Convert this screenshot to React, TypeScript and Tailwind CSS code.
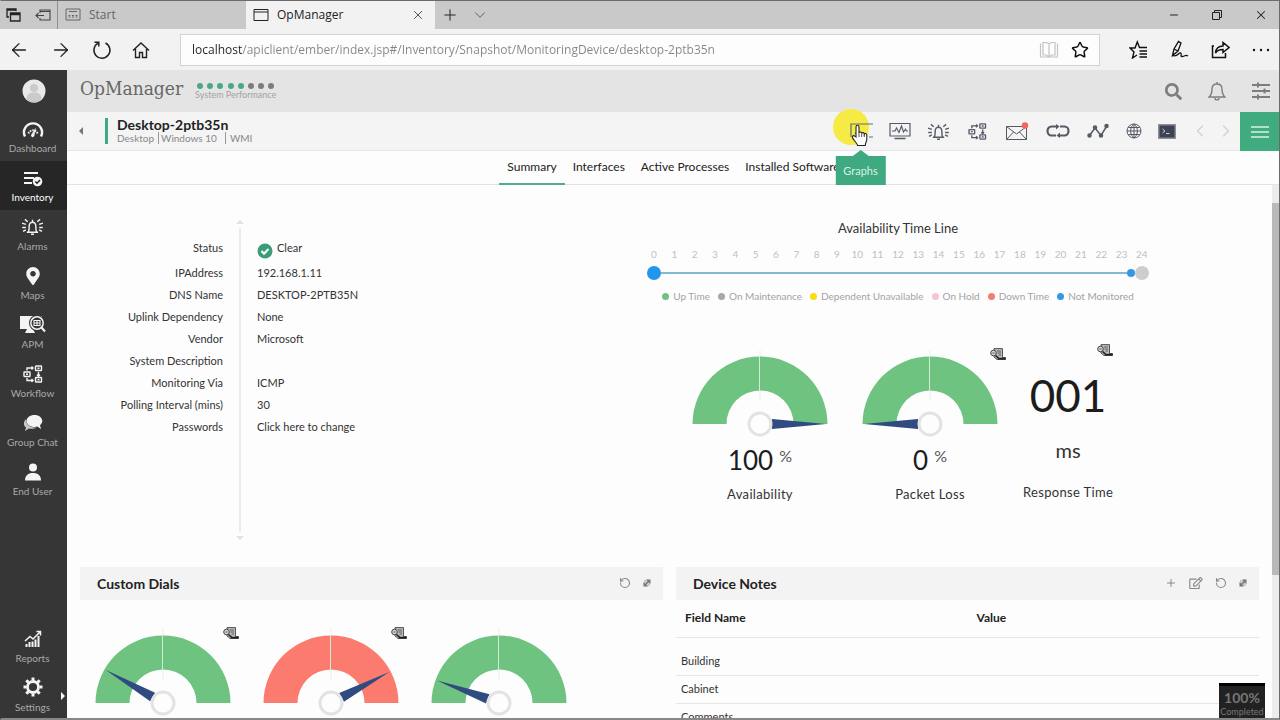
import type { ReactNode } from 'react';
import {
  ArrowLeft,
  ArrowRight,
  ChevronDown,
  ChevronLeft,
  ChevronRight,
  Minus,
  Plus,
  RotateCcw,
  Star,
  X,
} from 'lucide-react';
import { FaSearch, FaMapMarkerAlt, FaRegEdit } from 'react-icons/fa';

type IconProps = { className?: string };

const AlarmIcon = ({ className }: IconProps) => (
  <svg viewBox="0 0 24 20" className={className} fill="none" stroke="currentColor" strokeWidth="1.5">
    <path d="M6 16h12M7.5 16c1-1.2 1-3 1-6.5a3.5 4 0 0 1 7 0c0 3.500 0 5.300 1 6.500M10.500 18.200h3M12 3v2" />
    <path d="M1 6.500l4 1.300M1.200 11H5M2 15.200l3-1.600M4 2.500l3 2.500M23 6.500l-4 1.300M22.800 11H19M22 15.200l-3-1.600M20 2.500L17 5" />
  </svg>
);

const WorkflowIcon = ({ className }: IconProps) => (
  <svg viewBox="0 0 20 18" className={className} fill="none" stroke="currentColor" strokeWidth="1.4">
    <rect x="1" y="7" width="6" height="4.500" rx="0.500" />
    <rect x="12.500" y="1" width="6" height="4.500" rx="0.500" />
    <rect x="12.500" y="12.500" width="6" height="4.500" rx="0.500" />
    <path d="M4 5.500V3h6M8.500 1.500L10 3 8.500 4.500M4 13v2.500h6M8.500 14l1.500 1.500L8.500 17M15.500 7v4M14 9.800l1.500 1.500L17 9.800" />
    <path d="M3 9.200h2M14.500 3.200h2M14.500 14.800h2" />
  </svg>
);

const DashboardIcon = ({ className }: IconProps) => (
  <svg viewBox="0 0 22 18" className={className} fill="none" stroke="currentColor">
    <path d="M3 16.500a9 9 0 1 1 16 0" strokeWidth="2.400" />
    <path d="M6.500 13.500a4.800 4.800 0 0 1 9 0" strokeWidth="2" strokeDasharray="1.500 1" />
    <path d="M13.500 8.500l-1.300 6.500a1.500 1.500 0 1 1-2.400-.8z" fill="currentColor" strokeWidth="0.500" />
  </svg>
);

const InventoryIcon = ({ className }: IconProps) => (
  <svg viewBox="0 0 20 16" className={className} fill="none" stroke="currentColor">
    <path d="M1 2h14M1 7h10M1 12h8" strokeWidth="2" />
    <circle cx="14.500" cy="10.500" r="4.800" fill="currentColor" stroke="none" />
    <path d="M12.300 10.500l1.700 1.700 3-3.200" stroke="#262626" strokeWidth="1.500" />
  </svg>
);

const ApmIcon = ({ className }: IconProps) => (
  <svg viewBox="0 0 27 20" className={className} fill="none" stroke="currentColor">
    <path d="M1 2h22v13h-9l2 4H6l2-4H1z" fill="currentColor" stroke="none" />
    <circle cx="18" cy="9" r="8" fill="#363636" stroke="none" />
    <circle cx="18" cy="9" r="6.200" strokeWidth="1.500" />
    <path d="M15 6.500h6v5h-6zM15 9h6M18 6.500v5" strokeWidth="1.100" />
    <path d="M22.500 13.500l3.500 4" strokeWidth="2" />
  </svg>
);

const ChatIcon = ({ className }: IconProps) => (
  <svg viewBox="0 0 20 18" className={className}>
    <path d="M3 5C0 8 .5 12 3 13.500L2 17l4-2.500c3 .6 6 0 7.500-1C7 14 3 11 3 5z" fill="#c9c9c9" />
    <path d="M11.500 1C7 1 3.500 3.700 3.500 7s3.500 6 8 6c1 0 2-.1 2.800-.4L18 15l-1-3.800c1.400-1 2.300-2.500 2.300-4.200 0-3.300-3.300-6-7.800-6z" fill="currentColor" />
  </svg>
);

const UserIcon = ({ className }: IconProps) => (
  <svg viewBox="0 0 18 18" className={className} fill="currentColor">
    <circle cx="9" cy="4.500" r="4" />
    <path d="M1 17.500c0-5 3-7.500 8-7.500s8 2.500 8 7.500z" />
  </svg>
);

const ReportsIcon = ({ className }: IconProps) => (
  <svg viewBox="0 0 18 18" className={className} fill="none" stroke="currentColor">
    <path d="M2.500 17v-3M5.500 17v-5M8.500 17v-5.500M11.500 17V9.500M14.500 17V6" strokeWidth="2" />
    <path d="M1 11l5-4.500 3 2.500 7-7M12.500 1.500H16.500V5.500" strokeWidth="1.500" />
  </svg>
);

const SettingsIcon = ({ className }: IconProps) => (
  <svg viewBox="0 0 20 20" className={className} fill="none" stroke="currentColor">
    <circle cx="10" cy="10" r="5.500" strokeWidth="2.800" />
    <path d="M10 .5v3M10 16.500v3M.5 10h3M16.500 10h3M3.300 3.300l2.100 2.100M14.600 14.600l2.100 2.100M3.300 16.700l2.100-2.100M14.600 5.400l2.100-2.100" strokeWidth="3" />
  </svg>
);

const HistoryIcon = ({ className }: IconProps) => (
  <svg viewBox="0 0 16 12" className={className} fill="none" stroke="#444">
    <path d="M4 .6h8.500v8.900H15.500v2H7L4 9z" fill="#bdbdbd" strokeWidth="0.900" />
    <circle cx="3.500" cy="5" r="2.800" fill="#d5d5d5" strokeWidth="1" />
    <path d="M7 3h4M7.500 5h3.500M8.500 7h2.500M2.300 5h2.400" strokeWidth="0.800" />
    <path d="M5.500 7.500l3 2.700M8 10.600h7.500" strokeWidth="1.600" stroke="#222" />
  </svg>
);

const ExpandIcon = ({ className }: IconProps) => (
  <svg viewBox="0 0 8 8" className={className}>
    <path d="M1 1h6v6H1z" fill="#c9c9c9" />
    <path d="M3 .5h4.500V5zM.5 3v4.500H5z" fill="#777" />
    <path d="M2 6l4-4" stroke="#777" strokeWidth="1.200" />
  </svg>
);

const navItems = [
  { label: 'Dashboard', icon: <DashboardIcon className="h-[18px] w-[22px]" /> },
  { label: 'Inventory', icon: <InventoryIcon className="h-4 w-5" />, active: true },
  { label: 'Alarms', icon: <AlarmIcon className="h-[19px] w-[23px]" /> },
  { label: 'Maps', icon: <FaMapMarkerAlt className="h-[18px] w-3.5" /> },
  { label: 'APM', icon: <ApmIcon className="h-5 w-[27px]" /> },
  { label: 'Workflow', icon: <WorkflowIcon className="h-[18px] w-5" /> },
  { label: 'Group Chat', icon: <ChatIcon className="h-[18px] w-5" /> },
  { label: 'End User', icon: <UserIcon className="h-[18px] w-[18px]" /> },
];

const tabs = ['Summary', 'Interfaces', 'Active Processes', 'Installed Software'];

const details: [string, ReactNode][] = [
  ['IPAddress', '192.168.1.11'],
  ['DNS Name', 'DESKTOP-2PTB35N'],
  ['Uplink Dependency', 'None'],
  ['Vendor', 'Microsoft'],
  ['System Description', ''],
  ['Monitoring Via', 'ICMP'],
  ['Polling Interval (mins)', '30'],
  ['Passwords', <a href="#passwords">Click here to change</a>],
];

const legend = [
  { label: 'Up Time', color: 'bg-[#6fc283]' },
  { label: 'On Maintenance', color: 'bg-[#a8a8a8]' },
  { label: 'Dependent Unavailable', color: 'bg-[#fbdc0e]' },
  { label: 'On Hold', color: 'bg-[#f8c3d2]' },
  { label: 'Down Time', color: 'bg-[#f07f72]' },
  { label: 'Not Monitored', color: 'bg-[#3498e4]' },
];

const customDials = [
  { angle: 30, color: '#6fc381', history: true },
  { angle: 152, color: '#fb7c6e', history: true },
  { angle: 20, color: '#6fc381', history: false },
];

function NavItem({ label, icon, active, arrow }: { label: string; icon: ReactNode; active?: boolean; arrow?: boolean }) {
  return (
    <a
      href={`#${label}`}
      className={`relative flex h-[49px] flex-col items-center pr-0.5 text-[10px] leading-4 ${active ? 'bg-[#262626] text-white' : 'text-[#a9a9a9]'}`}
    >
      <span className="flex h-7 items-end pt-1 pb-0.5 text-[#f4f4f4]">{icon}</span>
      {label}
      {arrow && <span className="absolute right-0.5 bottom-5 border-y-4 border-l-4 border-y-transparent border-l-white" />}
    </a>
  );
}

// angle: 0 points left, 180 points right
function Gauge({ angle, color = '#6fc381', history }: { angle: number; color?: string; history?: boolean }) {
  return (
    <div className="relative w-[136px]">
      <svg viewBox="0 0 136 90" className="block h-[90px] w-[136px]">
        <path d="M68 2v50" stroke="#ececec" />
        <path d="M.5 76a67.500 67.500 0 0 1 135 0h-34a33.500 33.500 0 0 0-67 0z" fill={color} />
        <path d="M67.500 8v35" stroke="#cfeed4" />
        <g transform={`rotate(${angle} 68 76)`}>
          <path d="M2 76l54-5v10z" fill="#2f4b7f" />
        </g>
        <circle cx="68" cy="76" r="11" fill="#fdfdfd" stroke="#e3e3e6" strokeWidth="3" />
      </svg>
      {history && <HistoryIcon className="absolute top-0 -right-2 h-3 w-4" />}
    </div>
  );
}

function BrowserBar() {
  return (
    <header className="font-['Open_Sans','Noto_Sans',sans-serif] text-[#222]">
      <div className="flex h-[29px] items-center bg-[#c9c9c9] text-xs">
        <div className="flex h-full w-[58px] items-center gap-3.5 border-r border-[#8f8f8f] pl-1.5">
          <svg viewBox="0 0 15 14" className="h-3.5 w-[15px]" fill="none" stroke="#222" strokeWidth="1.300">
            <path d="M3 9H1V1h9v2M1 2h9M4.500 5h9.500v8H4.500zM4.500 6.500H14" />
          </svg>
          <svg viewBox="0 0 16 12" className="h-3 w-4" fill="none" stroke="#444" strokeWidth="1.100">
            <path d="M5 4V1h10v10H5V9M5 2.500h10M1 6.500h8M3.500 4L1 6.500 3.500 9" />
          </svg>
        </div>
        <button className="flex h-full w-[188px] items-center gap-2 pl-[7px] text-[#666]">
          <svg viewBox="0 0 16 13" className="h-[13px] w-4" fill="none" stroke="#666">
            <path d="M1 1h14v11H1zM4 3.500h8" />
            <path d="M3.500 9h2M7 9h2M10.500 9h2M3.500 7.500h2M7 7.500h2M10.500 7.500h2" />
          </svg>
          Start
        </button>
        <div className="flex h-full w-[189px] items-center gap-2 bg-[#f2f2f2] pr-2.5 pl-[7px]">
          <svg viewBox="0 0 16 14" className="h-3.5 w-4" fill="none" stroke="#222">
            <path d="M1 1.500h14v11H1zM1 4h14" />
          </svg>
          <span className="flex-1">OpManager</span>
          <button aria-label="Close tab"><X className="h-3.5 w-3.5" strokeWidth={1.3} /></button>
        </div>
        <button aria-label="New tab" className="ml-1.5"><Plus className="h-[18px] w-[18px]" strokeWidth={1.3} /></button>
        <button aria-label="Tab previews" className="ml-3"><ChevronDown className="h-[18px] w-[18px] text-[#555]" strokeWidth={1.2} /></button>
        <div className="ml-auto flex items-center gap-[31px] pr-3">
          <button aria-label="Minimize"><Minus className="h-3 w-3" strokeWidth={2} /></button>
          <button aria-label="Restore">
            <svg viewBox="0 0 12 12" className="h-3 w-3" fill="none" stroke="#222">
              <path d="M1.500 3.500h7v7h-7zM3.500 3.500v-2h7v7h-2" />
            </svg>
          </button>
          <button aria-label="Close"><X className="h-3.5 w-3.5" strokeWidth={1.8} /></button>
        </div>
      </div>
      <div className="flex h-[41px] items-center bg-[#f2f2f2]">
        <div className="flex w-[180px] items-center gap-5 pl-2">
          <button aria-label="Back"><ArrowLeft className="h-[22px] w-[22px]" strokeWidth={1.4} /></button>
          <button aria-label="Forward"><ArrowRight className="h-[22px] w-[22px]" strokeWidth={1.4} /></button>
          <button aria-label="Refresh">
            <svg viewBox="0 0 20 20" className="h-5 w-5" fill="none" stroke="#222" strokeWidth="1.500">
              <path d="M13.500 3A8 8 0 1 1 6 3.200M2.500 2.200h4.300v4.300" />
            </svg>
          </button>
          <button aria-label="Home">
            <svg viewBox="0 0 18 18" className="h-[18px] w-[18px]" fill="none" stroke="#222" strokeWidth="1.400">
              <path d="M1 9.500L9 2l8 7.500M3.500 8v8.500h4v-5h3v5h4V8" />
            </svg>
          </button>
        </div>
        <div className="flex h-8 flex-1 items-center gap-3 border border-[#d2d2d2] bg-[#fdfdfd] pr-2.5 pl-[11px]">
          <input
            aria-label="Address"
            defaultValue="localhost/apiclient/ember/index.jsp#/Inventory/Snapshot/MonitoringDevice/desktop-2ptb35n"
            className="flex-1 bg-[linear-gradient(to_right,#222_50px,#858585_50px)] bg-clip-text text-xs text-transparent outline-none"
          />
          <button aria-label="Reading view">
            <svg viewBox="0 0 20 18" className="h-[18px] w-5" fill="none" stroke="#c4c4c4" strokeWidth="1.200">
              <path d="M10 3v13M1.500 2.500v13.500h17V2.500M4 14V1.500h3.500L10 3l2.500-1.500H16V14h-3.500L10 16l-2.500-2z" />
            </svg>
          </button>
          <button aria-label="Add to favorites"><Star className="h-[18px] w-[18px] text-[#111]" strokeWidth={2} strokeLinejoin="miter" /></button>
        </div>
        <div className="flex w-[180px] items-center justify-end gap-[22px] pr-2.5">
          <button aria-label="Favorites">
            <svg viewBox="0 0 19 19" className="h-[19px] w-[19px]" fill="none" stroke="#111" strokeWidth="1.400">
              <path d="M8 15l-4.500 3 1.500-6L1 8h5L8.300 2l2.200 5.500H18M10.500 11H18M10.500 14H18M10.500 17H18" />
            </svg>
          </button>
          <button aria-label="Notes">
            <svg viewBox="0 0 19 19" className="h-[19px] w-[19px]" fill="none" stroke="#111" strokeWidth="1.300">
              <path d="M2.500 15.500L4 9 8.500 1.500l2.500 1.500-3 8zM2.500 15.500c5 2 6-3 8-2.500s-1 4 2 3.500 3-2 5.500-.5M4 9l4 2" />
            </svg>
          </button>
          <button aria-label="Share">
            <svg viewBox="0 0 19 18" className="h-[18px] w-[19px]" fill="none" stroke="#111" strokeWidth="1.500">
              <path d="M3 5H1.500v11.500h13V12M4.500 12c.5-5 3.500-7 7.500-7V1.500L18 6.500l-6 5V8.500c-3.500 0-6 1-7.500 3.500z" />
            </svg>
          </button>
          <button aria-label="More">
            <svg viewBox="0 0 18 4" className="h-1 w-[18px]" fill="#111">
              <circle cx="2" cy="2" r="1.200" /><circle cx="9" cy="2" r="1.200" /><circle cx="16" cy="2" r="1.200" />
            </svg>
          </button>
        </div>
      </div>
    </header>
  );
}

function Sidebar() {
  return (
    <nav className="flex w-[67px] shrink-0 flex-col bg-[#363636]">
      <div className="flex h-[42px] items-center justify-center">
        <svg viewBox="0 0 24 24" className="h-6 w-6">
          <circle cx="12" cy="12" r="11.500" fill="#e9e9e9" />
          <circle cx="12" cy="9" r="4" fill="#cbcbcb" />
          <path d="M4.500 20c0-5 3-6.500 7.500-6.500s7.500 1.500 7.500 6.500c-4 4.500-11 4.500-15 0z" fill="#cbcbcb" />
        </svg>
      </div>
      {navItems.map((item) => (
        <NavItem key={item.label} {...item} />
      ))}
      <div className="mt-auto">
        <NavItem label="Reports" icon={<ReportsIcon className="h-[18px] w-[18px]" />} />
        <NavItem label="Settings" icon={<SettingsIcon className="h-5 w-5" />} arrow />
      </div>
    </nav>
  );
}

function DeviceBar() {
  return (
    <div className="flex h-[39px] items-center border-b border-[#e6e6e8] bg-[#f4f4f5]">
      <button aria-label="Back to list" className="ml-3 border-y-4 border-r-4 border-y-transparent border-r-[#777]" />
      <div className="ml-[22px] border-l-[3px] border-[#3fa981] pl-[9px]">
        <h1 className="text-sm leading-[14px] font-bold text-[#222]">Desktop-2ptb35n</h1>
        <p className="flex gap-1 text-[10px] leading-3 text-[#888]">
          <span>Desktop</span>
          <span className="border-l border-[#999] pl-0.5">Windows 10</span>
          <span className="ml-1 border-l border-[#999] pl-1">WMI</span>
        </p>
      </div>
      <div className="ml-auto flex items-center text-[#555a66]">
        <div className="relative flex w-[39px] justify-center">
          <span className="absolute -top-[13px] -left-2 h-9 w-9 rounded-full bg-[#f6ea45]" />
          <button aria-label="Graphs" className="relative">
            <svg viewBox="0 0 24 18" className="h-[18px] w-6" fill="none" stroke="#666b75" strokeWidth="1.200">
              <path d="M2 15V2h22M20 15h4M6 12l3-4" />
            </svg>
          </button>
          <svg viewBox="0 0 18 23" className="absolute top-0.5 left-2.5 z-20 h-[23px] w-[18px]" fill="#fff" stroke="#222" strokeWidth="1.100">
            <path d="M5 13V3c0-2.300 3-2.300 3 0v6c.3-1.500 2.600-1.300 2.700.4.500-1.200 2.500-1 2.600.7.600-1 2.500-.7 2.500 1V15c0 2.500-1.500 3.500-1.500 6.500H6.500C6 18.500 2.500 16.500 1.500 13.500c-.5-1.600 1.200-2.500 2.300-1.300z" />
            <path d="M8 9v4M10.700 9.500V13M13.300 10.500V13" strokeWidth="0.800" />
          </svg>
          <div className="absolute top-7 left-1/2 z-10 flex -translate-x-1/2 flex-col items-center">
            <span className="border-x-8 border-b-6 border-x-transparent border-b-[#3fa981]" />
            <span className="bg-[#3fa981] px-2 py-1.5 text-[11px] leading-[17px] text-[#d9f2e6]">Graphs</span>
          </div>
        </div>
        <button aria-label="Performance" className="flex w-[39px] justify-center">
          <svg viewBox="0 0 22 18" className="h-[18px] w-[22px]" fill="none" stroke="currentColor">
            <path d="M1 1.500h20v12.500H1z" strokeWidth="1.200" />
            <path d="M3 9h3l1.500-3L10 10.500 12.500 4l2 6L16.500 7l1 2H19" strokeWidth="1.100" />
            <path d="M5.500 16.500h11" strokeWidth="1.500" />
          </svg>
        </button>
        <button aria-label="Alarms" className="flex w-[39px] justify-center"><AlarmIcon className="h-[19px] w-[23px]" /></button>
        <button aria-label="Workflow" className="flex w-[39px] justify-center"><WorkflowIcon className="h-[17px] w-[19px]" /></button>
        <button aria-label="Mail" className="flex w-10 justify-center">
          <svg viewBox="0 0 24 19" className="h-[19px] w-6" fill="none" stroke="currentColor">
            <path d="M1.500 4.500h20v13h-20zM1.500 4.500l10 7.500 10-7.500M1.500 17.500l7-7.500M21.500 17.500l-7-7.500" />
            <circle cx="20" cy="3.500" r="3.200" fill="#f4655b" stroke="none" />
          </svg>
        </button>
        <button aria-label="Dependencies" className="flex w-[42px] justify-center">
          <svg viewBox="0 0 24 14" className="h-3.5 w-6" fill="none" stroke="currentColor" strokeWidth="2.200">
            <path d="M10 11.500H5.500a4 4.500 0 0 1 0-9H12M14 2.500h4.500a4 4.500 0 0 1 0 9H12" />
            <path d="M10 0l3.500 2.500L10 5.500zM14 8.500l-3.500 3L14 14z" fill="currentColor" stroke="none" />
          </svg>
        </button>
        <button aria-label="Trend" className="flex w-[38px] justify-center">
          <svg viewBox="0 0 22 16" className="h-4 w-[22px]" fill="currentColor" stroke="currentColor" strokeWidth="1.500">
            <path d="M2.500 12.500L8 5l6 7.500 5.500-9" fill="none" />
            <circle cx="2.500" cy="12.500" r="1.500" /><circle cx="8" cy="4.500" r="1.500" /><circle cx="14" cy="12.500" r="1.500" /><circle cx="19.500" cy="3" r="1.500" />
          </svg>
        </button>
        <button aria-label="Web" className="flex w-[34px] justify-center">
          <svg viewBox="0 0 16 16" className="h-4 w-4" fill="none" stroke="currentColor">
            <circle cx="8" cy="8" r="7" />
            <path d="M8 1v14M1 8h14M2.300 4.500h11.400M2.300 11.500h11.400M8 1C3.500 4 3.500 12 8 15M8 1c4.500 3 4.500 11 0 14" />
          </svg>
        </button>
        <button aria-label="Terminal" className="flex w-8 justify-center">
          <svg viewBox="0 0 18 15" className="h-[15px] w-[18px]">
            <path d="M0 0h18v15H0z" fill="#8b8f99" />
            <path d="M1.500 1.500h15v12h-15z" fill="#3d4354" />
            <path d="M4.500 5l2.500 2-2.500 2M8 9.500h3.500" fill="none" stroke="#c9ccd4" />
          </svg>
        </button>
        <button aria-label="Previous" className="flex w-[33px] justify-center text-[#cfcfd6]"><ChevronLeft className="h-5 w-5" strokeWidth={1.4} /></button>
        <button aria-label="Next" className="flex w-5 justify-center text-[#cfcfd6]"><ChevronRight className="h-5 w-5" strokeWidth={1.4} /></button>
      </div>
      <button aria-label="Menu" className="-mb-px ml-1 flex h-[39px] w-10 items-center justify-center bg-[#3fab7f]">
        <svg viewBox="0 0 18 14" className="h-3.5 w-[18px]" stroke="#d8f3e6" strokeWidth="1.300">
          <path d="M0 2h18M0 7h18M0 12h18" />
        </svg>
      </button>
    </div>
  );
}

function PanelHeader({ title, children }: { title: string; children?: ReactNode }) {
  return (
    <div className="flex h-[33px] items-center bg-[#f3f3f3] pr-3 pl-[17px] text-[#888]">
      <h2 className="mr-auto text-sm font-bold text-[#222]">{title}</h2>
      <div className="flex items-center gap-3 pb-0.5">
        {children}
        <button aria-label="Refresh"><RotateCcw className="h-3 w-3" strokeWidth={2.2} /></button>
        <button aria-label="Expand"><ExpandIcon className="h-2 w-2" /></button>
      </div>
    </div>
  );
}

function Details() {
  return (
    <dl className="grid grid-cols-[143px_1fr] content-start gap-x-[34px] pt-[19px] text-[11px] leading-[22px] text-[#333]">
      <dt className="h-[25px] text-right">Status</dt>
      <dd className="flex h-[25px] gap-1">
        <svg viewBox="0 0 16 16" className="mt-1.5 h-4 w-4">
          <circle cx="8" cy="8" r="7.500" fill="#3a9d78" />
          <path d="M4.500 8l2.500 2.700L11.500 6" fill="none" stroke="#fff" strokeWidth="2" />
        </svg>
        Clear
      </dd>
      {details.map(([label, value]) => (
        <div key={label} className="contents">
          <dt className="h-[22px] text-right">{label}</dt>
          <dd>{value}</dd>
        </div>
      ))}
    </dl>
  );
}

function Availability() {
  return (
    <div className="text-center">
      <h2 className="text-[13px] leading-5 text-[#333]">Availability Time Line</h2>
      <div className="mt-2 flex justify-between text-[10px] leading-4 text-[#c0c0c0]">
        {Array.from({ length: 25 }, (_, hour) => (
          <span key={hour} className="w-5">{hour}</span>
        ))}
      </div>
      <div className="mt-1 flex items-center px-[3px]">
        <span className="h-3.5 w-3.5 rounded-full bg-[#2196ec]" />
        <span className="h-0.5 flex-1 bg-[#84b9d3]" />
        <span className="h-2 w-2 rounded-full bg-[#3498e4]" />
        <span className="h-3.5 w-3.5 rounded-full bg-[#cdcdcd]" />
      </div>
      <ul className="mt-2 flex justify-center gap-2 text-[10px] leading-4 text-[#a3a3a3]">
        {legend.map((item) => (
          <li key={item.label} className="flex items-center gap-1">
            <span className={`h-[7px] w-[7px] rounded-full ${item.color}`} />
            {item.label}
          </li>
        ))}
      </ul>
      <div className="mt-11 flex gap-[34px] pl-12 text-[13px] text-[#333]">
        {[
          { label: 'Availability', value: 100, history: false },
          { label: 'Packet Loss', value: 0, history: true },
        ].map((dial) => (
          <div key={dial.label}>
            <Gauge angle={dial.value * 1.8} history={dial.history} />
            <div className="mt-1 flex justify-center gap-1.5 text-[26px] leading-9 text-[#1c1c1c]">
              {dial.value}
              <span className="text-base leading-7 text-[#555]">%</span>
            </div>
            <div className="mt-1 leading-6 tracking-wide">{dial.label}</div>
          </div>
        ))}
        <div className="relative -ml-[9px] pt-5">
          <HistoryIcon className="absolute -top-1 right-0 h-3 w-4" />
          <div className="text-[44px] leading-[54px] text-[#1c1c1c]">001</div>
          <div className="mt-4 text-xl leading-6 text-[#333]">ms</div>
          <div className="mt-5 leading-5 tracking-wide">Response Time</div>
        </div>
      </div>
    </div>
  );
}

function DeviceNotes() {
  return (
    <section>
      <PanelHeader title="Device Notes">
        <button aria-label="Add"><Plus className="h-3 w-3" strokeWidth={2} /></button>
        <button aria-label="Edit"><FaRegEdit className="h-3 w-3.5" /></button>
      </PanelHeader>
      <table className="w-full text-left text-[11px] text-[#333]">
        <thead>
          <tr className="h-[37px] border-b border-[#e6e6e6] text-xs text-[#222]">
            <th className="w-1/2 pl-[9px]">Field Name</th>
            <th className="pl-[9px]">Value</th>
          </tr>
        </thead>
        <tbody>
          <tr className="h-[38px] border-b border-[#e6e6e6]"><td className="pt-2.5 pl-[5px]">Building</td><td /></tr>
          <tr className="h-7 border-b border-[#e6e6e6]"><td className="pl-[5px]">Cabinet</td><td /></tr>
          <tr className="h-7 border-b border-[#e6e6e6]"><td className="pl-[5px]">Comments</td><td /></tr>
        </tbody>
      </table>
    </section>
  );
}

export default function App() {
  return (
    <div className="relative flex h-screen flex-col overflow-hidden bg-[#fdfdfd] font-['Lato','Open_Sans',sans-serif]">
      <BrowserBar />
      <div className="flex min-h-0 flex-1">
        <Sidebar />
        <main className="flex min-w-0 flex-1 flex-col">
          <div className="flex h-[42px] items-center bg-[#e4e4e4] pr-2.5 pl-[13px] text-[#7d7d7d]">
            <span className="pb-1.5 font-['Roboto_Slab','DejaVu_Serif_Condensed','DejaVu_Serif',serif] text-[19px] leading-6 font-light text-[#666]">OpManager</span>
            <div className="ml-3 pt-0.5">
              <div className="flex justify-between px-0.5">
                {Array.from({ length: 8 }, (_, i) => (
                  <span key={i} className={`h-1.5 w-1.5 rounded-full ${i < 5 ? 'bg-[#4aa886]' : 'bg-[#7d7d7d]'}`} />
                ))}
              </div>
              <div className="text-[9px] leading-3 text-[#a3a3a3]">System Performance</div>
            </div>
            <div className="ml-auto flex items-center gap-[26px]">
              <button aria-label="Search"><FaSearch className="h-[17px] w-[17px]" /></button>
              <button aria-label="Notifications">
                <svg viewBox="0 0 18 20" className="h-5 w-[18px]" fill="none" stroke="currentColor" strokeWidth="1.400">
                  <path d="M1 16h16c-2.500-2-3-4-3-8 0-3-2-5-5-5S4 5 4 8c0 4-.5 6-3 8zM9 1v2M7 17c0 2.500 4 2.500 4 0" />
                </svg>
              </button>
              <button aria-label="Preferences">
                <svg viewBox="0 0 18 18" className="h-[18px] w-[18px]" fill="none" stroke="currentColor" strokeWidth="2">
                  <path d="M0 3h18M0 9h18M0 15h18M6 .5v5M12.500 6.500v5M6 12.500v5" />
                </svg>
              </button>
            </div>
          </div>
          <DeviceBar />
          <div className="flex h-[34px] justify-center border-b border-[#e4e4e4]" role="tablist">
            {tabs.map((tab) => (
              <button
                key={tab}
                role="tab"
                className={`-mb-px border-b-2 px-2 text-xs text-[#222] ${tab === 'Summary' ? 'border-[#4fae88]' : 'border-transparent'}`}
              >
                {tab}
              </button>
            ))}
          </div>
          <div className="flex min-h-0 flex-1">
            <div className="min-w-0 flex-1 overflow-hidden pr-[13px] pl-[13px]">
              <div className="grid h-[382px] grid-cols-[564fr_508fr_107fr] pt-[33px]">
                <div className="relative">
                  <Details />
                  <div className="absolute top-0.5 left-[156px] flex h-80 w-2 flex-col items-center gap-1">
                    <span className="border-x-4 border-b-4 border-x-transparent border-b-[#e2e2e2]" />
                    <span className="w-0.5 flex-1 bg-[#ececec]" />
                    <span className="border-x-4 border-t-4 border-x-transparent border-t-[#e2e2e2]" />
                  </div>
                </div>
                <Availability />
              </div>
              <div className="grid grid-cols-2 gap-x-[13px]">
                <section>
                  <PanelHeader title="Custom Dials" />
                  <div className="flex gap-8 pt-[27px] pl-[15px]">
                    {customDials.map((dial, i) => (
                      <Gauge key={i} {...dial} />
                    ))}
                  </div>
                </section>
                <DeviceNotes />
              </div>
            </div>
            <div className="flex w-2 flex-col bg-[#ececec] pt-[18px]">
              <div className="h-[372px] bg-[#b9b9b9]" />
            </div>
          </div>
        </main>
      </div>
      <div className="absolute right-[15px] bottom-0 flex w-[46px] flex-col items-center border-t-[3px] border-black bg-[#222] pt-1 pb-0.5 text-[#777]">
        <b className="text-sm leading-4">100%</b>
        <span className="text-[9px] leading-3">Completed</span>
      </div>
      <div className="pointer-events-none absolute inset-0 border border-b-2 border-[#6b6b6b] border-l-transparent border-b-[#8b8688]" />
    </div>
  );
}
